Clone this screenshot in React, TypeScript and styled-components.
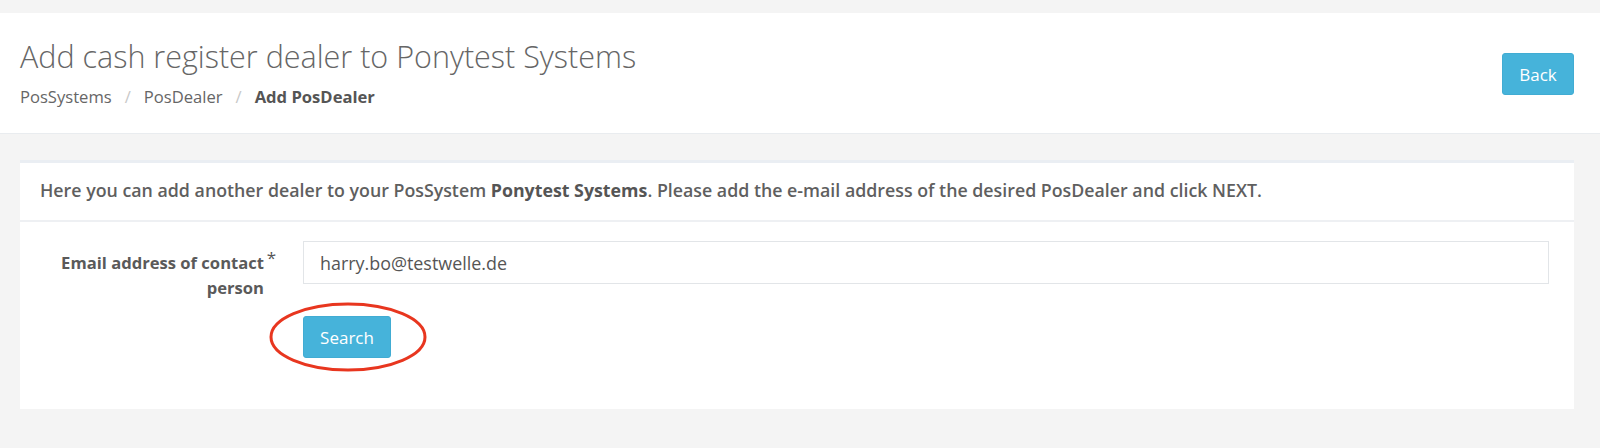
import React from "react";
import styled, { createGlobalStyle } from "styled-components";

const GlobalStyle = createGlobalStyle`
  html, body {
    margin: 0;
    padding: 0;
    background: #f4f4f4;
    font-family: "Open Sans", "Noto Sans", Arial, sans-serif;
  }
  * { box-sizing: border-box; }
`;

const Page = styled.div`
  padding-top: 13px;
  min-height: 448px;
`;

const Header = styled.header`
  background: #ffffff;
  border-bottom: 1px solid #e9ecef;
  height: 121px;
  padding: 25px 26px 0 20px;
  display: flex;
  justify-content: space-between;
  align-items: flex-start;
`;

const TitleBlock = styled.div`
  display: flex;
  flex-direction: column;
`;

const Title = styled.h1`
  margin: 0;
  font-size: 30.5px;
  line-height: 36px;
  font-weight: 300;
  color: #666666;
  letter-spacing: 0;
`;

const Breadcrumb = styled.nav`
  margin-top: 12px;
  display: flex;
  align-items: center;
  font-size: 16.6px;
  line-height: 22px;
  color: #666666;
`;

const Crumb = styled.span<{ $active?: boolean }>`
  font-weight: ${(p) => (p.$active ? 700 : 400)};
  color: ${(p) => (p.$active ? "#555555" : "#666666")};
`;

const Sep = styled.span`
  color: #c8c8c8;
  margin: 0 13px;
`;

const Button = styled.button`
  background: #46b3da;
  border: 1px solid #41acd3;
  border-radius: 3px;
  color: #ffffff;
  font-family: "Open Sans", "Noto Sans", Arial, sans-serif;
  font-size: 17px;
  height: 42px;
  padding: 0 16px;
  cursor: pointer;
`;

const BackButton = styled(Button)`
  width: 72px;
  margin-top: 15px;
`;

const Content = styled.main`
  padding: 26px 26px 0 20px;
`;

const Panel = styled.section`
  background: #ffffff;
  border-top: 3px solid #eaeef3;
`;

const Info = styled.div`
  height: 59px;
  padding: 16px 20px 0 20px;
  font-size: 17.8px;
  line-height: 22px;
  font-weight: 600;
  color: #5f5f5f;
  border-bottom: 2px solid #eef0f3;
  & b { font-weight: 700; color: #555; }
`;

const FormBody = styled.div`
  padding: 19px 25px 51px 0;
`;

const FormRow = styled.div`
  display: grid;
  grid-template-columns: 244px 1fr;
  column-gap: 39px;
  align-items: start;
`;

const Label = styled.label`
  position: relative;
  text-align: right;
  padding-top: 10px;
  font-size: 16.6px;
  line-height: 24.5px;
  font-weight: 700;
  color: #5a5a5a;
`;

const Required = styled.span`
  position: absolute;
  right: -12px;
  top: 8px;
  font-size: 17px;
  line-height: 17px;
  font-weight: 400;
  color: #555;
`;

const Input = styled.input`
  height: 43px;
  border: 1px solid #e2e5e8;
  background: #ffffff;
  padding: 0 16px;
  font-family: "Open Sans", "Noto Sans", Arial, sans-serif;
  font-size: 17.9px;
  color: #555555;
  outline: none;
  width: 100%;
`;

const ActionRow = styled.div`
  margin-top: 16px;
  padding-left: 283px;
`;

const Highlight = styled.div`
  position: relative;
  display: inline-block;
`;

const SearchButton = styled(Button)`
  width: 88px;
  display: block;
`;

const Ring = styled.svg`
  position: absolute;
  left: -35px;
  top: -15px;
  width: 160px;
  height: 72px;
  pointer-events: none;
  overflow: visible;
`;

export default function App() {
  return (
    <>
      <GlobalStyle />
      <Page>
        <Header>
          <TitleBlock>
            <Title>Add cash register dealer to Ponytest Systems</Title>
            <Breadcrumb>
              <Crumb>PosSystems</Crumb>
              <Sep>/</Sep>
              <Crumb>PosDealer</Crumb>
              <Sep>/</Sep>
              <Crumb $active>Add PosDealer</Crumb>
            </Breadcrumb>
          </TitleBlock>
          <BackButton>Back</BackButton>
        </Header>
        <Content>
          <Panel>
            <Info>
              Here you can add another dealer to your PosSystem <b>Ponytest Systems</b>. Please add the
              e-mail address of the desired PosDealer and click NEXT.
            </Info>
            <FormBody>
              <FormRow>
                <Label>
                  Email address of contact person
                  <Required>*</Required>
                </Label>
                <Input defaultValue="harry.bo@testwelle.de" />
              </FormRow>
              <ActionRow>
                <Highlight>
                  <SearchButton>Search</SearchButton>
                  <Ring viewBox="0 0 160 72">
                    <ellipse cx="80" cy="36" rx="77" ry="33" fill="none" stroke="#e8361f" strokeWidth="3" />
                  </Ring>
                </Highlight>
              </ActionRow>
            </FormBody>
          </Panel>
        </Content>
      </Page>
    </>
  );
}
